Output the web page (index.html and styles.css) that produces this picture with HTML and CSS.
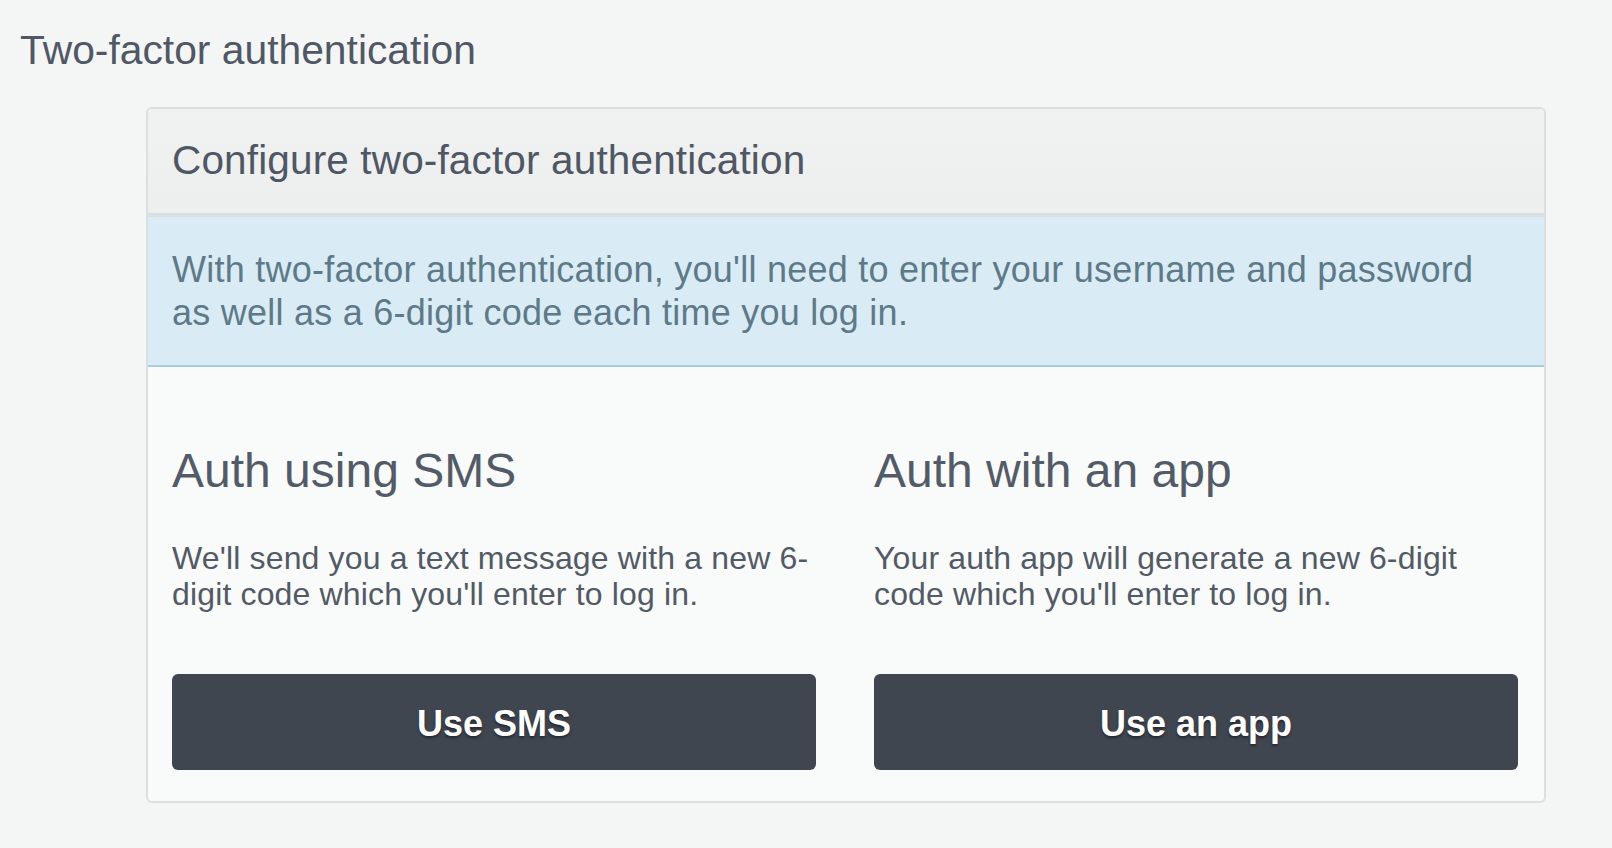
FILE: index.html
```html
<!DOCTYPE html>
<html lang="en">
<head>
<meta charset="utf-8">
<title>Two-factor authentication</title>
<link rel="stylesheet" href="styles.css">
</head>
<body>
<div class="page">
  <h1 class="page-title">Two-factor authentication</h1>
  <section class="panel">
    <header class="panel-heading">
      <h2 class="panel-title">Configure two-factor authentication</h2>
    </header>
    <div class="alert-info">
      <p>With two-factor authentication, you'll need to enter your username and password as well as a 6-digit code each time you log in.</p>
    </div>
    <div class="panel-body">
      <div class="option">
        <h3 class="option-title">Auth using SMS</h3>
        <p class="option-text">We'll send you a text message with a new 6-digit code which you'll enter to log in.</p>
        <button class="btn" type="button">Use SMS</button>
      </div>
      <div class="option">
        <h3 class="option-title">Auth with an app</h3>
        <p class="option-text">Your auth app will generate a new 6-digit code which you'll enter to log in.</p>
        <button class="btn" type="button">Use an app</button>
      </div>
    </div>
  </section>
</div>
</body>
</html>
```

FILE: styles.css
```css
html, body {
  margin: 0;
  padding: 0;
  background: #f4f6f5;
}

body {
  font-family: "Liberation Sans", Arial, Helvetica, sans-serif;
  color: #525a65;
}

.page {
  padding: 26px 66px 0 20px;
}

.page-title {
  margin: 0 0 33px 0;
  font-size: 40.8px;
  line-height: 48px;
  font-weight: normal;
  color: #4f5864;
}

.panel {
  box-sizing: border-box;
  width: 1400px;
  margin-left: 126px;
  border: 2px solid #dcdfdf;
  border-radius: 6px;
  background: #f9fafa;
  overflow: hidden;
}

.panel-heading {
  background: linear-gradient(#f0f1f1, #edefee);
  border-bottom: 4px solid #dcdfdf;
  padding: 28px 24px 29px 24px;
}

.panel-title {
  margin: 0;
  font-size: 40.5px;
  line-height: 47px;
  font-weight: normal;
  letter-spacing: 0.15px;
  color: #4e5763;
}

.alert-info {
  background: #d9ecf5;
  border-bottom: 2px solid #a6cde0;
  padding: 31px 40px 31px 24px;
}

.alert-info p {
  margin: 0;
  font-size: 36px;
  line-height: 43px;
  letter-spacing: 0.25px;
  color: #5e7a88;
}

.panel-body {
  display: grid;
  grid-template-columns: 1fr 1fr;
  column-gap: 58px;
  padding: 75px 26px 31px 24px;
}

.option {
  display: flex;
  flex-direction: column;
}

.option-title {
  margin: 0;
  font-size: 48px;
  line-height: 58px;
  font-weight: normal;
  color: #525b67;
}

.option-text {
  margin: 40px 0 62px 0;
  font-size: 32px;
  line-height: 36px;
  letter-spacing: 0.15px;
  color: #525a65;
}

.btn {
  display: flex;
  align-items: center;
  justify-content: center;
  box-sizing: border-box;
  width: 100%;
  height: 96px;
  padding: 4px 0 0 0;
  margin: 0;
  border: 0;
  border-radius: 6px;
  background: #404650;
  color: #ffffff;
  font-family: "Liberation Sans", Arial, Helvetica, sans-serif;
  font-size: 36px;
  line-height: 36px;
  font-weight: bold;
  text-shadow: 0 2px 3px rgba(0, 0, 0, 0.45);
}
```
